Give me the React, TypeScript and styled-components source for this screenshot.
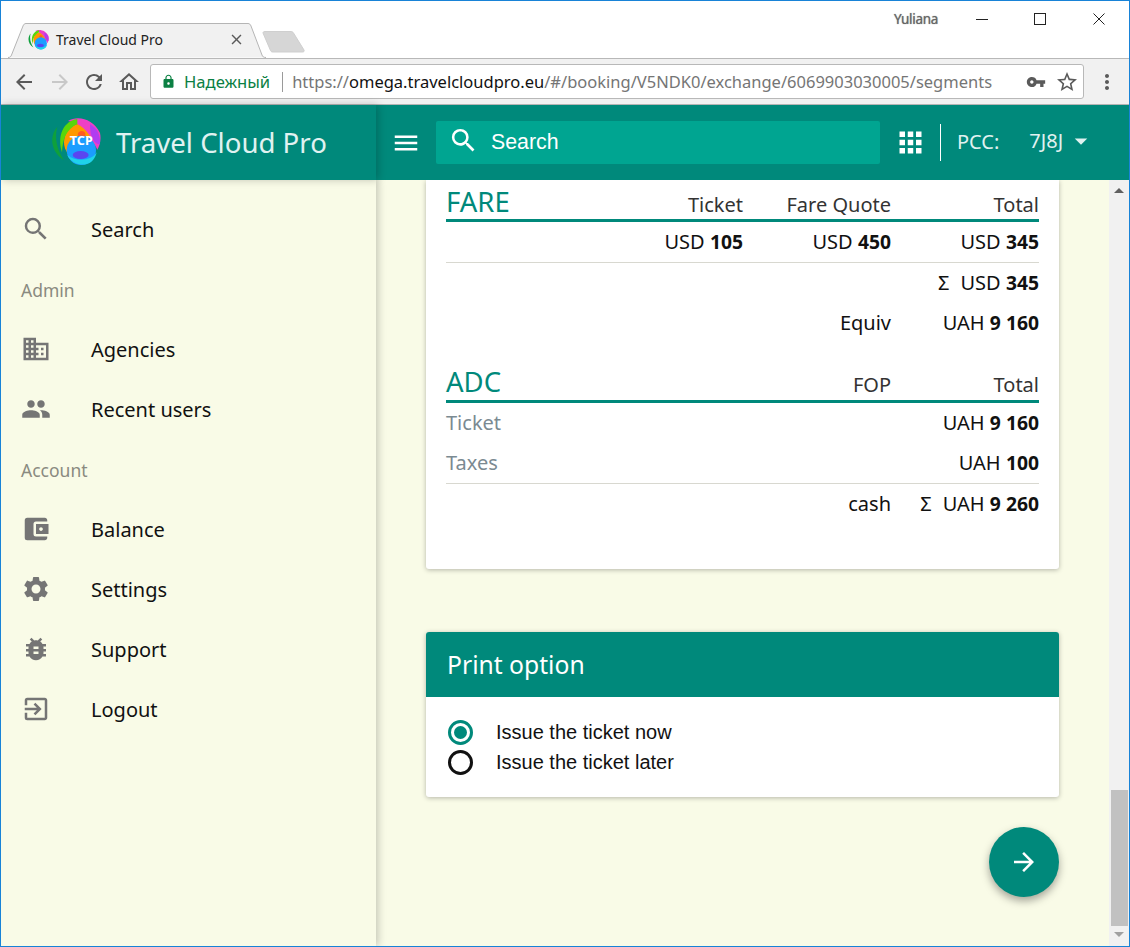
import React from 'react';
import styled, { createGlobalStyle } from 'styled-components';
import {
    MdAccountBalanceWallet,
    MdApps,
    MdArrowBack,
    MdArrowDropDown,
    MdArrowForward,
    MdBugReport,
    MdBusiness,
    MdClose,
    MdExitToApp,
    MdLock,
    MdMenu,
    MdMoreVert,
    MdOutlineHome,
    MdPeople,
    MdRefresh,
    MdSearch,
    MdSettings,
    MdStarBorder,
    MdVpnKey,
} from 'react-icons/md';

const TEAL = '#00897b';
const CREAM = '#f9fbe7';

const GlobalStyle = createGlobalStyle`
  html, body {
    margin: 0;
    padding: 0;
    background: #fff;
  }
  * {
    box-sizing: border-box;
  }
`;

const Window = styled.div`
  width: 1130px;
  height: 947px;
  border: 1px solid #1883d7;
  display: flex;
  flex-direction: column;
  overflow: hidden;
  font-family: "Noto Sans", sans-serif;
  background: #fff;
`;

/* browser chrome */
const TitleBar = styled.div`
  height: 57px;
  flex: none;
  display: flex;
  align-items: flex-end;
  padding-left: 7px;
`;

const Tab = styled.div`
  position: relative;
  width: 258px;
  height: 35px;
  display: flex;
  align-items: center;
  padding: 0 21px 2px 20px;
  gap: 7px;
`;

const TabShape = styled.svg`
  position: absolute;
  left: 0;
  top: 0;
`;

const TabTitle = styled.span`
  position: relative;
  flex: 1;
  font-size: 14px;
  color: #222;
  white-space: nowrap;
`;

const TabClose = styled.span`
  position: relative;
  display: flex;
  color: #5a5a5a;
  font-size: 17px;
`;

const FaviconSlot = styled.span`
  position: relative;
  display: flex;
`;

const NewTab = styled.svg`
  margin: 0 0 5px -5px;
`;

const TitleRight = styled.div`
  margin-left: auto;
  align-self: flex-start;
  display: flex;
  align-items: center;
  height: 36px;
`;

const UserName = styled.span`
  font-size: 13.5px;
  color: #666;
  letter-spacing: -0.3px;
  margin-right: 38px;
  text-shadow: 0 0 1px #777;
`;

const WinButton = styled.svg<{ $gap: number }>`
  display: block;
  margin-right: ${(p) => p.$gap}px;
`;

const Toolbar = styled.div`
  height: 47px;
  flex: none;
  background: #f1f1f1;
  border-top: 1px solid #b8b8b8;
  border-bottom: 1px solid #b4b4b4;
  display: flex;
  align-items: center;
  padding-left: 11px;
  color: #5a5a5a;
`;

const NavIcon = styled.span<{ $dim?: boolean; $w: number }>`
  width: ${(p) => p.$w}px;
  flex: none;
  display: flex;
  font-size: 24px;
  color: ${(p) => (p.$dim ? '#c8c8c8' : '#5a5a5a')};
`;

const AddressBar = styled.div`
  width: 934px;
  height: 35px;
  flex: none;
  margin-left: 3px;
  background: #fff;
  border: 1px solid #b8b8b8;
  border-radius: 3px;
  display: flex;
  align-items: center;
  padding-left: 10px;
  font-size: 16.5px;
  white-space: nowrap;
`;

const Secure = styled.span`
  color: #0b8043;
  display: flex;
  align-items: center;
  gap: 8px;
  font-size: 16.6px;
`;

const AddressDivider = styled.span`
  width: 1px;
  height: 20px;
  background: #9a9a9a;
  margin: 0 9px 0 12px;
`;

const UrlPart = styled.span<{ $host?: boolean }>`
  color: ${(p) => (p.$host ? '#111' : '#757575')};
`;

const AddressIcons = styled.span`
  margin-left: auto;
  display: flex;
  align-items: center;
  gap: 9px;
  padding-right: 4px;
  color: #5a5a5a;
`;

const Kebab = styled.span`
  margin-left: 11px;
  display: flex;
  color: #5a5a5a;
  font-size: 24px;
`;

/* app header */
const AppHeader = styled.header`
  position: relative;
  z-index: 1;
  height: 75px;
  flex: none;
  background: ${TEAL};
  display: flex;
  align-items: center;
  color: #e0f2f1;
`;

const Brand = styled.div`
  width: 375px;
  height: 100%;
  flex: none;
  display: flex;
  align-items: center;
  padding-left: 50px;
  gap: 15px;
  background: ${TEAL};
  box-shadow: 2px 0 8px rgba(0, 0, 0, 0.22);
`;

const LogoSlot = styled.span`
  display: flex;
  margin-top: -3px;
`;

const BrandName = styled.span`
  font-size: 27.6px;
  margin-top: -2px;
`;

const Burger = styled.span`
  display: flex;
  color: #fff;
  font-size: 30px;
  margin-left: 15px;
`;

const SearchBox = styled.div`
  width: 444px;
  height: 43px;
  margin-left: 15px;
  margin-top: -1px;
  background: #00a591;
  border-radius: 2px;
  display: flex;
  align-items: center;
  padding-left: 12px;
  color: #fff;
  font-family: "Liberation Sans", Arial, sans-serif;
  font-size: 21.3px;
  gap: 12px;
`;

const SearchGlass = styled.span`
  display: flex;
  font-size: 31px;
  margin-top: -4px;
`;

const AppsIcon = styled.span`
  display: flex;
  color: #fff;
  font-size: 33px;
  margin-left: 14px;
`;

const HeaderDivider = styled.span`
  width: 1px;
  height: 37px;
  background: #fff;
  margin-left: 13px;
`;

const PccLabel = styled.span`
  font-size: 20px;
  margin: -2px 0 0 16px;
`;

const PccValue = styled.span`
  font-size: 20px;
  margin: -5px 0 0 30px;
`;

const Caret = styled.span`
  display: flex;
  color: #e0f2f1;
  font-size: 30px;
  margin: -3px 0 0 3px;
`;

/* body */
const Body = styled.div`
  flex: 1;
  min-height: 0;
  display: flex;
  background: ${CREAM};
`;

const Sidebar = styled.nav`
  width: 375px;
  flex: none;
  padding: 19px 0 0 20px;
  background: ${CREAM};
  box-shadow: 2px 0 8px rgba(0, 0, 0, 0.22);
`;

const NavRow = styled.div`
  height: 60px;
  display: flex;
  align-items: center;
  gap: 40px;
  font-size: 20px;
  color: #111;
  svg {
    font-size: 30px;
    color: #757575;
    flex: none;
  }
`;

const NavLabel = styled.div`
  height: 60px;
  display: flex;
  align-items: center;
  padding-top: 2px;
  font-size: 17.5px;
  color: #8a8a80;
`;

const Main = styled.main`
  flex: 1;
  min-width: 0;
  padding: 0 50px;
  display: flex;
  flex-direction: column;
`;

const FareCard = styled.section`
  background: #fff;
  padding: 0 20px 45px;
  border-radius: 0 0 3px 3px;
  box-shadow: 0 1px 5px rgba(0, 0, 0, 0.28);
`;

const HeadRow = styled.div<{ $gap?: boolean }>`
  height: 42px;
  margin-top: ${(p) => (p.$gap ? 18 : 0)}px;
  display: grid;
  grid-template-columns: 1fr 148px 148px 148px;
  align-items: baseline;
  padding-top: ${(p) => (p.$gap ? 2 : 3)}px;
  border-bottom: 3px solid ${TEAL};
`;

const HeadTitle = styled.span`
  font-size: 27.5px;
  color: ${TEAL};
`;

const HeadCell = styled.span<{ $col?: number }>`
  grid-column: ${(p) => p.$col ?? 'auto'};
  font-size: 20px;
  color: #333;
  text-align: right;
`;

const Row = styled.div<{ $line?: boolean }>`
  height: ${(p) => (p.$line ? 41 : 40)}px;
  padding-bottom: 2px;
  display: grid;
  grid-template-columns: 1fr 148px 148px 148px;
  align-items: center;
  font-size: 20px;
  color: #111;
  border-bottom: ${(p) => (p.$line ? '1px solid #d8d8d0' : 'none')};
`;

const Cell = styled.span<{ $col?: number; $muted?: boolean }>`
  grid-column: ${(p) => p.$col ?? 'auto'};
  text-align: ${(p) => (p.$muted ? 'left' : 'right')};
  color: ${(p) => (p.$muted ? '#7b8a92' : '#111')};
  white-space: nowrap;
  b {
    font-size: 19.3px;
  }
`;

const Sum = styled.span`
  margin-right: 11px;
`;

const PrintCard = styled.section`
  margin-top: 63px;
  background: #fff;
  border-radius: 3px;
  box-shadow: 0 1px 5px rgba(0, 0, 0, 0.28);
`;

const PrintHeader = styled.div`
  height: 65px;
  background: ${TEAL};
  color: #fff;
  font-size: 24.7px;
  display: flex;
  align-items: center;
  padding-left: 21px;
  border-radius: 3px 3px 0 0;
`;

const PrintBody = styled.div`
  padding: 20px 22px;
`;

const RadioRow = styled.label`
  height: 30px;
  display: flex;
  align-items: center;
  gap: 23px;
  font-family: "Liberation Sans", Arial, sans-serif;
  font-size: 20px;
  color: #111;
`;

const RadioMark = styled.span<{ $on?: boolean }>`
  width: 25px;
  height: 25px;
  flex: none;
  border-radius: 50%;
  border: 3px solid ${(p) => (p.$on ? TEAL : '#111')};
  display: flex;
  align-items: center;
  justify-content: center;
  &::after {
    content: '';
    width: 13px;
    height: 13px;
    border-radius: 50%;
    background: ${(p) => (p.$on ? TEAL : 'transparent')};
  }
`;

const Fab = styled.button`
  width: 70px;
  height: 70px;
  margin: 30px 0 0 auto;
  border: none;
  border-radius: 50%;
  background: ${TEAL};
  color: #fff;
  display: flex;
  align-items: center;
  justify-content: center;
  font-size: 30px;
  box-shadow: 0 4px 8px rgba(0, 0, 0, 0.35);
`;

const ScrollBar = styled.div`
  width: 20px;
  flex: none;
  background: #f1f1f1;
  display: flex;
  flex-direction: column;
  justify-content: space-between;
  align-items: center;
`;

const ScrollArrow = styled.span<{ $down?: boolean }>`
  width: 0;
  height: 0;
  margin: ${(p) => (p.$down ? '6px 0 9px' : '8px 0 0')};
  border-left: 5px solid transparent;
  border-right: 5px solid transparent;
  border-bottom: ${(p) => (p.$down ? 'none' : '5px solid #606060')};
  border-top: ${(p) => (p.$down ? '5px solid #a0a0a0' : 'none')};
`;

const ScrollEnd = styled.div`
  width: 100%;
  display: flex;
  flex-direction: column;
  align-items: center;
`;

const ScrollThumb = styled.div`
  width: 17px;
  height: 136px;
  margin-left: 1px;
  background: #c1c1c1;
`;

// the round TCP logo, coordinates follow a 3x crop of the reference
const Logo: React.FC<{ size: number; label?: boolean }> = ({ size, label }) => (
    <svg width={size} height={size} viewBox="33 33 150 150">
        <path d="M72 112C72 82 92 58 120 56C146 56 160 84 164 112L150 140L84 146C76 136 72 124 72 112Z" fill="#ff9800" />
        <path d="M84 48C114 30 160 42 180 84C184 104 180 120 172 134C166 120 160 116 156 108C150 84 122 54 84 48Z" fill="#ee3fc6" />
        <path d="M150 58C170 68 182 90 180 118C162 118 150 96 150 58Z" fill="#b13df0" />
        <path d="M116 82C128 72 142 84 134 96C120 102 108 92 116 82Z" fill="#ff5a1f" />
        <circle cx="124" cy="136" r="44" fill="#1b9dff" />
        <path d="M82 150C92 172 116 182 138 178C156 174 166 160 170 142C156 166 112 174 82 150Z" fill="#1fd3ea" />
        <ellipse cx="122" cy="150" rx="24" ry="12" fill="#5a45f0" />
        <path d="M52 65C28 92 30 138 72 166C52 136 42 100 52 65Z" fill="#0fa03c" />
        <path d="M112 42C72 48 50 90 66 142C68 102 78 74 112 56Z" fill="#5ad60a" />
        {label && (
            <text x="124" y="120" fill="#fff" fontFamily="'Noto Sans', sans-serif" fontWeight="700" fontSize="38" textAnchor="middle">
                TCP
            </text>
        )}
    </svg>
);

const navTop = [{ icon: <MdSearch />, text: 'Search' }];
const navAdmin = [
    { icon: <MdBusiness />, text: 'Agencies' },
    { icon: <MdPeople />, text: 'Recent users' },
];
const navAccount = [
    { icon: <MdAccountBalanceWallet />, text: 'Balance' },
    { icon: <MdSettings />, text: 'Settings' },
    { icon: <MdBugReport />, text: 'Support' },
    { icon: <MdExitToApp />, text: 'Logout' },
];

const renderNav = (items: { icon: React.ReactNode; text: string }[]) =>
    items.map((item) => (
        <NavRow key={item.text}>
            {item.icon}
            {item.text}
        </NavRow>
    ));

const Money: React.FC<{ cur: string; val: string }> = ({ cur, val }) => (
    <>
        {cur} <b>{val}</b>
    </>
);

const App: React.FC = () => {
    return (
        <Window>
            <GlobalStyle />
            <TitleBar>
                <Tab>
                    <TabShape width="258" height="35" viewBox="0 0 258 35">
                        <path d="M0 34.500C2 34.500 3 33.500 3.500 32L15 3C15.500 1.500 16.500 0.500 18 0.500L240 0.500C241.500 0.500 242.500 1.500 243 3L254 32C254.500 33.500 255.500 34.500 258 34.500" fill="#f1f1f1" stroke="#b5b5b5" />
                    </TabShape>
                    <FaviconSlot>
                        <Logo size={21} />
                    </FaviconSlot>
                    <TabTitle>Travel Cloud Pro</TabTitle>
                    <TabClose>
                        <MdClose />
                    </TabClose>
                </Tab>
                <NewTab width="44" height="22" viewBox="0 0 44 22">
                    <path d="M2 2C2 1 2.500 0.500 4 0.500L30 0.500C31 0.500 32 1 32.500 2L43 19C43.500 20.500 43 21 41 21L12 21C10.500 21 10 20.500 9.500 19.500Z" fill="#d6d6d6" stroke="#cfcfcf" />
                </NewTab>
                <TitleRight>
                    <UserName>Yuliana</UserName>
                    <WinButton $gap={46} width="12" height="12" viewBox="0 0 12 12">
                        <path d="M0 6.500H12" stroke="#222" />
                    </WinButton>
                    <WinButton $gap={47} width="12" height="12" viewBox="0 0 12 12">
                        <rect x="0.500" y="0.500" width="11" height="11" fill="none" stroke="#222" />
                    </WinButton>
                    <WinButton $gap={24} width="12" height="12" viewBox="0 0 12 12">
                        <path d="M0.500 0.500L11.500 11.500M11.500 0.500L0.500 11.500" stroke="#222" />
                    </WinButton>
                </TitleRight>
            </TitleBar>

            <Toolbar>
                <NavIcon $w={36}>
                    <MdArrowBack />
                </NavIcon>
                <NavIcon $w={34} $dim>
                    <MdArrowForward />
                </NavIcon>
                <NavIcon $w={35}>
                    <MdRefresh />
                </NavIcon>
                <NavIcon $w={30}>
                    <MdOutlineHome />
                </NavIcon>
                <AddressBar>
                    <Secure>
                        <MdLock size={15} />
                        Надежный
                    </Secure>
                    <AddressDivider />
                    <UrlPart>https://</UrlPart>
                    <UrlPart $host>omega.travelcloudpro.eu</UrlPart>
                    <UrlPart>/#/booking/V5NDK0/exchange/6069903030005/segments</UrlPart>
                    <AddressIcons>
                        <MdVpnKey size={20} />
                        <MdStarBorder size={24} />
                    </AddressIcons>
                </AddressBar>
                <Kebab>
                    <MdMoreVert />
                </Kebab>
            </Toolbar>

            <AppHeader>
                <Brand>
                    <LogoSlot>
                        <Logo size={50} label />
                    </LogoSlot>
                    <BrandName>Travel Cloud Pro</BrandName>
                </Brand>
                <Burger>
                    <MdMenu />
                </Burger>
                <SearchBox>
                    <SearchGlass>
                        <MdSearch />
                    </SearchGlass>
                    Search
                </SearchBox>
                <AppsIcon>
                    <MdApps />
                </AppsIcon>
                <HeaderDivider />
                <PccLabel>PCC:</PccLabel>
                <PccValue>7J8J</PccValue>
                <Caret>
                    <MdArrowDropDown />
                </Caret>
            </AppHeader>

            <Body>
                <Sidebar>
                    {renderNav(navTop)}
                    <NavLabel>Admin</NavLabel>
                    {renderNav(navAdmin)}
                    <NavLabel>Account</NavLabel>
                    {renderNav(navAccount)}
                </Sidebar>

                <Main>
                    <FareCard>
                        <HeadRow>
                            <HeadTitle>FARE</HeadTitle>
                            <HeadCell>Ticket</HeadCell>
                            <HeadCell>Fare Quote</HeadCell>
                            <HeadCell>Total</HeadCell>
                        </HeadRow>
                        <Row $line>
                            <Cell $col={2}>
                                <Money cur="USD" val="105" />
                            </Cell>
                            <Cell $col={3}>
                                <Money cur="USD" val="450" />
                            </Cell>
                            <Cell $col={4}>
                                <Money cur="USD" val="345" />
                            </Cell>
                        </Row>
                        <Row>
                            <Cell $col={4}>
                                <Sum>Σ</Sum>
                                <Money cur="USD" val="345" />
                            </Cell>
                        </Row>
                        <Row>
                            <Cell $col={3}>Equiv</Cell>
                            <Cell $col={4}>
                                <Money cur="UAH" val="9 160" />
                            </Cell>
                        </Row>

                        <HeadRow $gap>
                            <HeadTitle>ADC</HeadTitle>
                            <HeadCell $col={3}>FOP</HeadCell>
                            <HeadCell $col={4}>Total</HeadCell>
                        </HeadRow>
                        <Row>
                            <Cell $muted>Ticket</Cell>
                            <Cell $col={4}>
                                <Money cur="UAH" val="9 160" />
                            </Cell>
                        </Row>
                        <Row $line>
                            <Cell $muted>Taxes</Cell>
                            <Cell $col={4}>
                                <Money cur="UAH" val="100" />
                            </Cell>
                        </Row>
                        <Row>
                            <Cell $col={3}>cash</Cell>
                            <Cell $col={4}>
                                <Sum>Σ</Sum>
                                <Money cur="UAH" val="9 260" />
                            </Cell>
                        </Row>
                    </FareCard>

                    <PrintCard>
                        <PrintHeader>Print option</PrintHeader>
                        <PrintBody>
                            <RadioRow>
                                <RadioMark $on />
                                Issue the ticket now
                            </RadioRow>
                            <RadioRow>
                                <RadioMark />
                                Issue the ticket later
                            </RadioRow>
                        </PrintBody>
                    </PrintCard>

                    <Fab>
                        <MdArrowForward />
                    </Fab>
                </Main>

                <ScrollBar>
                    <ScrollArrow />
                    <ScrollEnd>
                        <ScrollThumb />
                        <ScrollArrow $down />
                    </ScrollEnd>
                </ScrollBar>
            </Body>
        </Window>
    );
};

export default App;
